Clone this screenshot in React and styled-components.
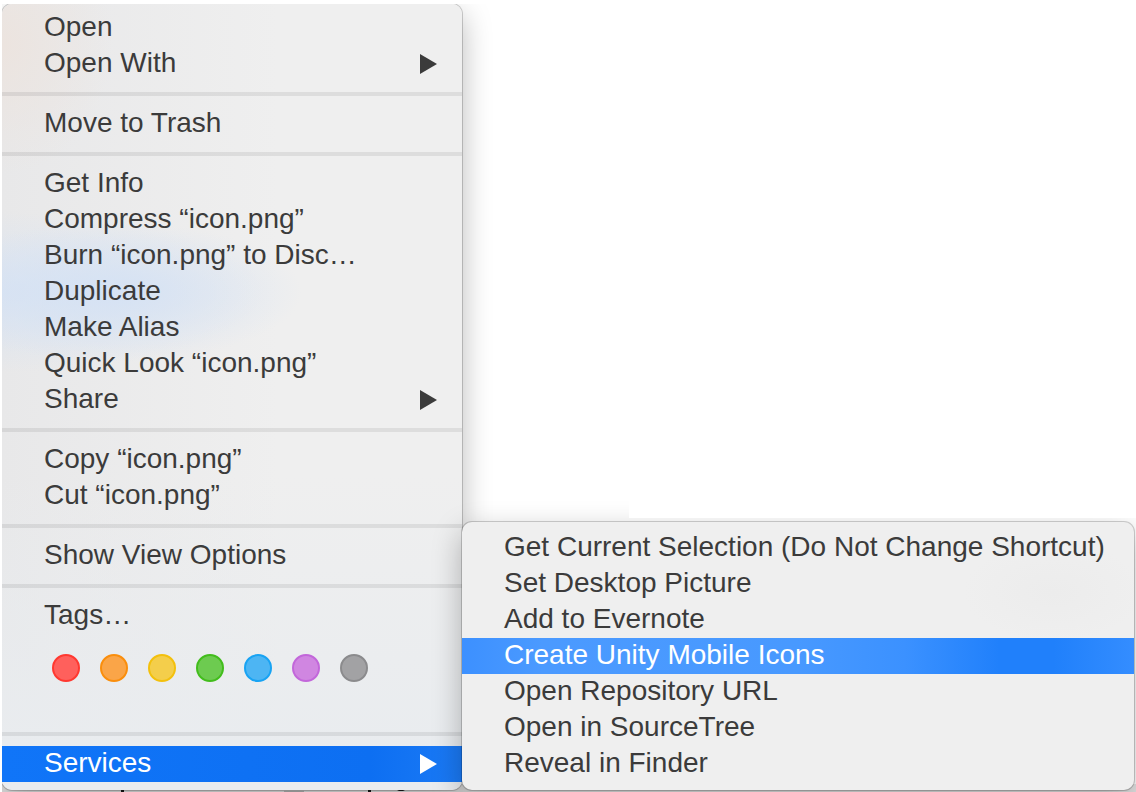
import React from "react";
import styled, { createGlobalStyle, css } from "styled-components";

const Global = createGlobalStyle`
  * { box-sizing: border-box; }
  body { margin: 0; background: #fff; font-family: "Liberation Sans", Arial, sans-serif; }
`;

const Page = styled.main`
  padding: 4px 0 0 2px;
`;

const Desktop = styled.div`
  position: relative;
  display: flex;
  align-items: flex-end;
  overflow: hidden;
  padding: 0 2px 2px 0;
  background: linear-gradient(to top, #e4e4e4 8px, #fff 8px);
`;

const panel = css`
  position: relative;
  display: flex;
  flex-direction: column;
  border-radius: 10px;
  box-shadow: 0 0 0 1px #0000002e, 0 10px 30px #00000048;
`;

const ContextMenu = styled.nav`
  ${panel}
  flex: none;
  width: 460px;
  padding: 6px 0 8px;
  background:
    radial-gradient(ellipse 190px 70px at 110px 288px, #d5e2f4, #d5e2f400),
    radial-gradient(ellipse 260px 80px at 0 288px, #d5e2f4cc, #d5e2f400),
    radial-gradient(ellipse 110px 130px at 0 40px, #ece4df, #ece4df00),
    linear-gradient(to bottom, #ececec00 60%, #e9ecef 95%),
    linear-gradient(to right, #e8e8e9, #efefef 60%);
`;

/* The white window behind hides the upper part of the shadow on its side. */
const Submenu = styled.nav`
  ${panel}
  flex: 1;
  min-width: 0;
  padding: 8px 0;
  background:
    radial-gradient(ellipse 90px 50px at 88% 70px, #ececec, #ececec00),
    #efefef;

  &::before {
    content: "";
    position: absolute;
    bottom: calc(100% + 4px);
    left: 167px;
    right: -2px;
    height: 40px;
    background: #fff;
  }
`;

const Item = styled.button`
  display: flex;
  align-items: center;
  justify-content: space-between;
  width: 100%;
  height: 36px;
  padding: 0 24px 0 42px;
  border: 0;
  background: ${(p) => p.$fill || "transparent"};
  color: ${(p) => (p.$fill ? "#fff" : "#3b3b3b")};
  font: inherit;
  font-size: 28px;
  line-height: 34px;
  text-align: left;
  white-space: nowrap;
`;

const Label = styled.span`
  padding-bottom: 2px;
`;

const Separator = styled.hr`
  width: 100%;
  height: 4px;
  margin: 10px 0;
  border: 0;
  background: #00000013;
`;

const Tags = styled.div`
  display: flex;
  gap: 20px;
  height: 88px;
  padding: 20px 50px;
`;

const Tag = styled.button`
  width: 28px;
  height: 28px;
  padding: 0;
  border: 2px solid ${(p) => p.$edge};
  border-radius: 50%;
  background: ${(p) => p.$fill};
`;

const PeekingRow = styled.svg`
  position: absolute;
  left: 0;
  bottom: 0;
`;

const Arrow = () => (
  <svg width="18" height="20" viewBox="0 0 18 20" aria-hidden="true">
    <path d="M0 0L17 10L0 20Z" fill="currentColor" />
  </svg>
);

const groups = [
  [["Open"], ["Open With", true]],
  [["Move to Trash"]],
  [
    ["Get Info"],
    ["Compress “icon.png”"],
    ["Burn “icon.png” to Disc…"],
    ["Duplicate"],
    ["Make Alias"],
    ["Quick Look “icon.png”"],
    ["Share", true],
  ],
  [["Copy “icon.png”"], ["Cut “icon.png”"]],
  [["Show View Options"]],
];

const tags = [
  ["Red", "#ff605c", "#ff3830"],
  ["Orange", "#faa548", "#fa8e0c"],
  ["Yellow", "#f4ce4b", "#f3c00d"],
  ["Green", "#6dcb50", "#42bd1c"],
  ["Blue", "#4db5f3", "#18a3f3"],
  ["Purple", "#d086e1", "#c267da"],
  ["Gray", "#a2a2a4", "#8b8b8d"],
];

const services = [
  "Get Current Selection (Do Not Change Shortcut)",
  "Set Desktop Picture",
  "Add to Evernote",
  "Create Unity Mobile Icons",
  "Open Repository URL",
  "Open in SourceTree",
  "Reveal in Finder",
];

export default function App() {
  return (
    <Page>
      <Global />
      <Desktop>
        <ContextMenu aria-label="File">
          {groups.map((group) => (
            <React.Fragment key={group[0][0]}>
              {group.map(([label, more]) => (
                <Item key={label}>
                  <Label>{label}</Label>
                  {more && <Arrow />}
                </Item>
              ))}
              <Separator />
            </React.Fragment>
          ))}
          <Item>
            <Label>Tags…</Label>
          </Item>
          <Tags>
            {tags.map(([name, fill, edge]) => (
              <Tag key={name} aria-label={name} $fill={fill} $edge={edge} />
            ))}
          </Tags>
          <Separator />
          <Item $fill="linear-gradient(to right, #1075f8, #0d6ff2 80%, #1b7af5)">
            <Label>Services</Label>
            <Arrow />
          </Item>
        </ContextMenu>
        <Submenu aria-label="Services">
          {services.map((label) => (
            <Item
              key={label}
              $fill={
                label === "Create Unity Mobile Icons" &&
                "linear-gradient(to right, #3c90ff, #4b9aff 12%, #4899ff 50%, #3b91ff 66%, #2080fb 80%, #2080fb 88%, #348dff)"
              }
            >
              <Label>{label}</Label>
            </Item>
          ))}
        </Submenu>
        <PeekingRow width="460" height="2" viewBox="0 0 460 2" aria-hidden="true">
          <path d="M119 0h3v2h-3zM366 0h3v2h-3zM395 0h8l-2 1h-4z" fill="#111" />
          <path d="M282 0h20v2h-20z" fill="#8f8f8f" />
        </PeekingRow>
      </Desktop>
    </Page>
  );
}
